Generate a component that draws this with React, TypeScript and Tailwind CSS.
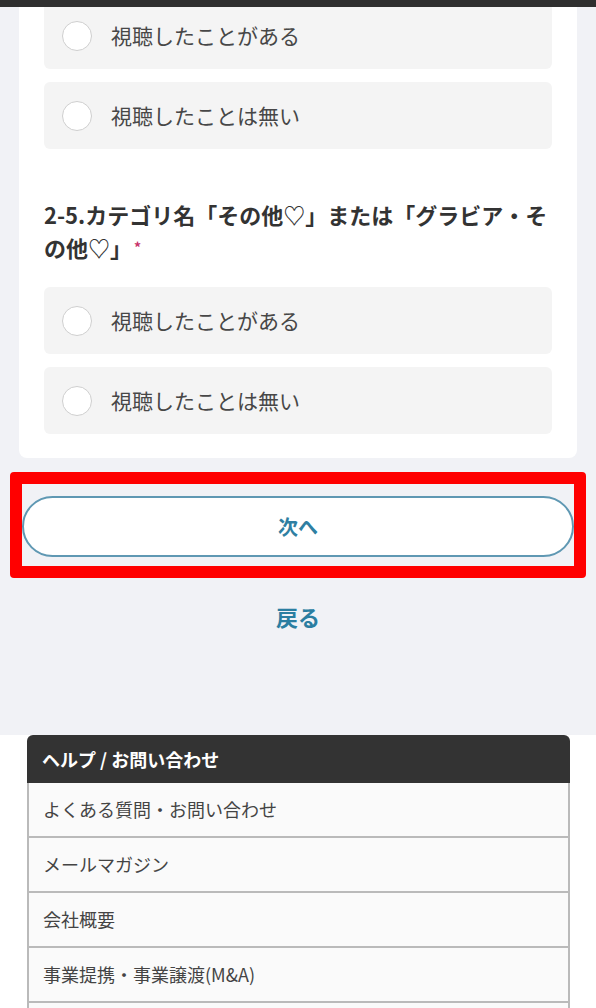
const font = { fontFamily: '"Noto Sans CJK JP", "Noto Sans", sans-serif' };

const helpLinks = [
  'よくある質問・お問い合わせ',
  'メールマガジン',
  '会社概要',
  '事業提携・事業譲渡(M&A)',
  '利用規約',
];

function RadioOption({ label }: { label: string }) {
  return (
    <label className="flex h-[67px] items-center rounded-md bg-[#f4f4f4] pl-[18px]">
      <span className="h-[30px] w-[30px] shrink-0 rounded-full border-[1.5px] border-[#cfcfcf] bg-white" />
      <span className="ml-[19px] text-[21px] text-[#474747]">{label}</span>
    </label>
  );
}

export default function App() {
  return (
    <div className="relative w-[596px] bg-white" style={font}>
      <div className="absolute inset-x-0 top-0 z-10 h-[7px] bg-[#2f2f2f]" />

      <main className="bg-[#f1f2f6] pb-[103px]">
        <section className="mx-[19px] rounded-b-lg bg-white px-[25px] pb-[24px] pt-[2px]">
          <div className="flex flex-col gap-[13px]">
            <RadioOption label="視聴したことがある" />
            <RadioOption label="視聴したことは無い" />
          </div>

          <h2 className="mt-[49px] text-[22px] font-bold leading-[33px] text-[#333]">
            2-5.カテゴリ名「その他♡」または「グラビア・その他♡」
            <span className="ml-[2px] align-top text-[14px] text-[#c8336b]">*</span>
          </h2>

          <div className="mt-[23px] flex flex-col gap-[13px]">
            <RadioOption label="視聴したことがある" />
            <RadioOption label="視聴したことは無い" />
          </div>
        </section>

        <div className="mx-[10px] mt-[14px] rounded-[4px] border-[12px] border-[#ff0000] pb-[9px] pt-[12px]">
          <button
            type="button"
            className="flex h-[61px] w-full items-center justify-center rounded-full border-2 border-[#5f98b3] bg-white text-[20px] font-bold text-[#2f7fa2]"
          >
            次へ
          </button>
        </div>

        <div className="mt-[22px] text-center text-[22px] font-bold leading-[32px] text-[#2b7ea1]">
          戻る
        </div>
      </main>

      <footer className="px-[27px] pb-10">
        <div className="w-[543px]">
          <div className="flex h-[48px] items-center rounded-t-md bg-[#333] pl-[15px] text-[18px] font-bold text-white">
            ヘルプ / お問い合わせ
          </div>
          <ul className="border-x-2 border-[#bababa]">
            {helpLinks.map((item) => (
              <li
                key={item}
                className="flex h-[55px] items-center border-b-2 border-[#bababa] bg-[#fafafa] pl-[14px] text-[18px] text-[#444]"
              >
                {item}
              </li>
            ))}
          </ul>
        </div>
      </footer>
    </div>
  );
}
